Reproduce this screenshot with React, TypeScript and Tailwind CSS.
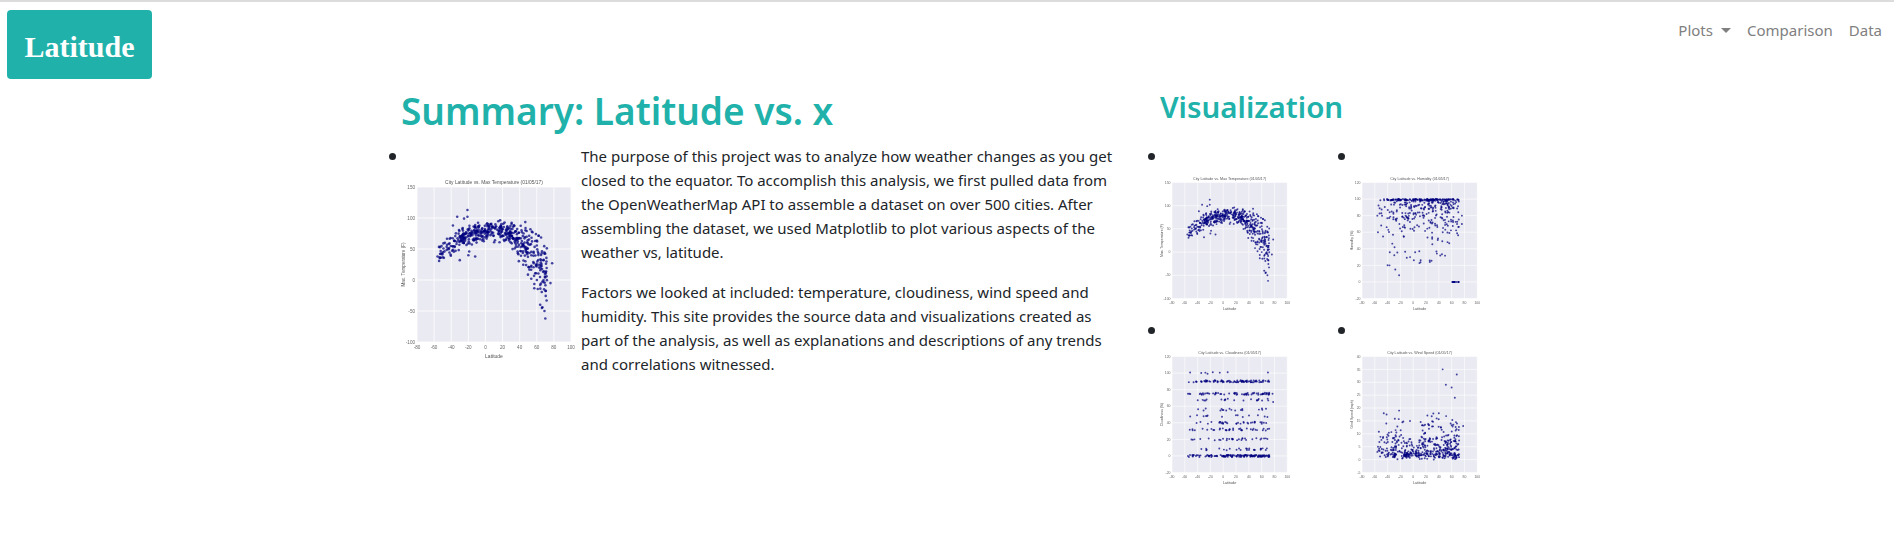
const teal = '#20b2aa';

const mulberry = (seed: number) => () => {
  seed = (seed + 0x6d2b79f5) | 0;
  let t = Math.imul(seed ^ (seed >>> 15), 1 | seed);
  t = (t + Math.imul(t ^ (t >>> 7), 61 | t)) ^ t;
  return ((t ^ (t >>> 14)) >>> 0) / 4294967296;
};

type Point = [number, number];

// few cities below -30, the rest spread up to about 72
const latitude = (r: () => number) => (r() < 0.12 ? -55 + 30 * r() : -32 + 104 * Math.pow(r(), 0.85));

const tempPoints = () => {
  const r = mulberry(7);
  const pts: Point[] = [];
  for (let i = 0; i < 500; i++) {
    const lat = latitude(r);
    const base = lat < 10 ? 80 - (lat - 5) ** 2 * 0.012 : 80 - (lat - 10) ** 2 * 0.021;
    const spread = lat > 25 ? 20 + (lat - 25) * 1.1 : 20;
    pts.push([lat, base + (r() + r() - 1) * spread]);
  }
  pts.push([-21, 113], [-33, 102], [-21, 102], [-25, 99], [-38, 88], [-30, 32], [-20, 40], [-19, 46], [-12, 38], [55, 77], [59, 74], [-56, 38], [-53, 42], [78, 27], [76, -5], [70, -62], [69, -50], [66, -45], [64, -40]);
  return pts;
};

const humidityPoints = () => {
  const r = mulberry(21);
  const pts: Point[] = [];
  for (let i = 0; i < 100; i++) pts.push([-45 + r() * 118, 100 - r() * 1.5]);
  for (let i = 0; i < 300; i++) {
    const lat = latitude(r);
    pts.push([lat, 100 - r() * r() * 62]);
  }
  for (let i = 0; i < 22; i++) pts.push([-40 + r() * 90, 20 + r() * 25]);
  for (let i = 0; i < 14; i++) pts.push([60 + r() * 12, 0]);
  pts.push([-22, 8], [-28, 15], [-37, 20], [-56, 80], [-55, 60], [-50, 68], [76, 80], [76, 70]);
  return pts;
};

const cloudPoints = () => {
  const r = mulberry(33);
  const bands: [number, number][] = [[0, 130], [8, 25], [20, 30], [32, 36], [40, 32], [48, 14], [56, 18], [68, 20], [75, 60], [90, 90], [100, 8]];
  const pts: Point[] = [];
  bands.forEach(([y, n]) => {
    for (let i = 0; i < n; i++) pts.push([latitude(r), y + (r() - 0.5) * 2.5]);
  });
  pts.push([-55, 75], [-53, 75], [-55, 0], [-48, 0], [77, 75], [78, 65]);
  return pts;
};

const windPoints = () => {
  const r = mulberry(45);
  const pts: Point[] = [];
  for (let i = 0; i < 460; i++) {
    const lat = latitude(r);
    const top = lat < -15 ? 18 : lat < 10 ? 9 : 19;
    pts.push([lat, r() * r() * top + r() * 2]);
  }
  pts.push([46, 35], [51, 29], [60, 28], [68, 33], [65, 24], [-46, 18], [-42, 14], [-22, 19], [-5, 15], [40, 18], [78, 13], [-56, 3], [-55, 5]);
  return pts;
};

const ChartImage = ({
  title,
  yLabel,
  yTicks,
  points,
  width,
  blur,
}: {
  title: string;
  yLabel: string;
  yTicks: number[];
  points: Point[];
  width: number;
  blur: string;
}) => {
  const px = 16;
  const py = 14;
  const pw = 154;
  const ph = 155;
  const xTicks = [-80, -60, -40, -20, 0, 20, 40, 60, 80, 100];
  const yMin = yTicks[0];
  const yMax = yTicks[yTicks.length - 1];
  const sx = (v: number) => px + ((v + 80) / 180) * pw;
  const sy = (v: number) => py + ph - ((v - yMin) / (yMax - yMin)) * ph;
  return (
    <svg viewBox="0 0 175 193" width={width} height={(width * 193) / 175} className={`block ${blur}`}>
      <rect x={px} y={py} width={pw} height={ph} fill="#eaeaf2" />
      {xTicks.map((t) => (
        <g key={t}>
          <line x1={sx(t)} x2={sx(t)} y1={py} y2={py + ph} stroke="#fff" strokeWidth="0.8" />
          <text x={sx(t)} y={py + ph + 7} fontSize="4.6" fill="#666" textAnchor="middle" fontFamily="Liberation Sans, sans-serif">
            {t}
          </text>
        </g>
      ))}
      {yTicks.map((t) => (
        <g key={t}>
          <line x1={px} x2={px + pw} y1={sy(t)} y2={sy(t)} stroke="#fff" strokeWidth="0.8" />
          <text x={px - 2} y={sy(t) + 1.6} fontSize="4.6" fill="#666" textAnchor="end" fontFamily="Liberation Sans, sans-serif">
            {t}
          </text>
        </g>
      ))}
      {points.map(([x, y], i) => (
        <circle key={i} cx={sx(x)} cy={sy(y)} r="1.3" fill="#000080" fillOpacity="0.72" />
      ))}
      <text x={px + pw / 2} y={py - 3.5} fontSize="4.9" fill="#555" textAnchor="middle" fontFamily="Liberation Sans, sans-serif">
        {title}
      </text>
      <text x={px + pw / 2} y={py + ph + 16} fontSize="5" fill="#555" textAnchor="middle" fontFamily="Liberation Sans, sans-serif">
        Latitude
      </text>
      <text
        transform={`translate(3.5 ${py + ph / 2}) rotate(-90)`}
        fontSize="4.6"
        fill="#555"
        textAnchor="middle"
        fontFamily="Liberation Sans, sans-serif"
      >
        {yLabel}
      </text>
    </svg>
  );
};

const plots = [
  {
    title: 'City Latitude vs. Max Temperature (01/05/17)',
    yLabel: 'Max. Temperature (F)',
    yTicks: [-100, -50, 0, 50, 100, 150],
    points: tempPoints(),
  },
  {
    title: 'City Latitude vs. Humidity (01/05/17)',
    yLabel: 'Humidity (%)',
    yTicks: [-20, 0, 20, 40, 60, 80, 100, 120],
    points: humidityPoints(),
  },
  {
    title: 'City Latitude vs. Cloudiness (01/05/17)',
    yLabel: 'Cloudiness (%)',
    yTicks: [-20, 0, 20, 40, 60, 80, 100, 120],
    points: cloudPoints(),
  },
  {
    title: 'City Latitude vs. Wind Speed (01/05/17)',
    yLabel: 'Wind Speed (mph)',
    yTicks: [-5, 0, 5, 10, 15, 20, 25, 30, 35, 40],
    points: windPoints(),
  },
];

const App = () => {
  return (
    <div className="min-h-[552px] border-t-2 border-[#dcdcdc] bg-white font-['Noto_Sans',sans-serif] text-[15px] leading-6 text-[#212529]">
      <header className="flex items-start justify-between">
        <a className="ml-[7px] mt-2 flex h-[69px] w-[145px] items-center justify-center rounded bg-[#20b2aa] pt-1 font-['Liberation_Serif',serif] text-[30px] font-bold text-white">
          Latitude
        </a>
        <nav className="mt-4 flex items-center gap-4 pr-3 text-[#808080]">
          <a className="flex items-center gap-2">
            Plots
            <span className="border-x-[5px] border-t-[5px] border-x-transparent border-t-[#808080]" />
          </a>
          <a>Comparison</a>
          <a>Data</a>
        </nav>
      </header>
      <main className="flex pl-[401px]">
        <section className="w-[759px]">
          <h1 className="mt-2 text-[37px] font-semibold leading-[48px]" style={{ color: teal }}>
            Summary: Latitude vs. x
          </h1>
          <div className="mt-[9px] flex">
            <ul className="w-[180px] list-disc pl-[9px] pt-px marker:text-[20px]">
              <li>
                <div>&nbsp;</div>
                <div className="-ml-[9px] mt-[3px]">
                  <ChartImage {...plots[0]} width={175} blur="blur-[0.5px]" />
                </div>
              </li>
            </ul>
            <div className="w-[540px]">
              <p className="mb-4">
                The purpose of this project was to analyze how weather changes as you get closed to the equator. To
                accomplish this analysis, we first pulled data from the OpenWeatherMap API to assemble a dataset on over
                500 cities. After assembling the dataset, we used Matplotlib to plot various aspects of the weather vs,
                latitude.
              </p>
              <p>
                Factors we looked at included: temperature, cloudiness, wind speed and humidity. This site provides the
                source data and visualizations created as part of the analysis, as well as explanations and descriptions
                of any trends and correlations witnessed.
              </p>
            </div>
          </div>
        </section>
        <section>
          <h2 className="mt-[9px] text-[29.5px] font-semibold leading-[38px]" style={{ color: teal }}>
            Visualization
          </h2>
          <ul className="mt-[19px] grid list-disc auto-rows-[174px] grid-cols-[190px_190px] pl-[9px] marker:text-[20px]">
            {plots.map((plot) => (
              <li key={plot.title}>
                <div>&nbsp;</div>
                <div className="-ml-[9px] mt-[2px]">
                  <ChartImage {...plot} width={131} blur="blur-[0.7px]" />
                </div>
              </li>
            ))}
          </ul>
        </section>
      </main>
    </div>
  );
};

export default App;
